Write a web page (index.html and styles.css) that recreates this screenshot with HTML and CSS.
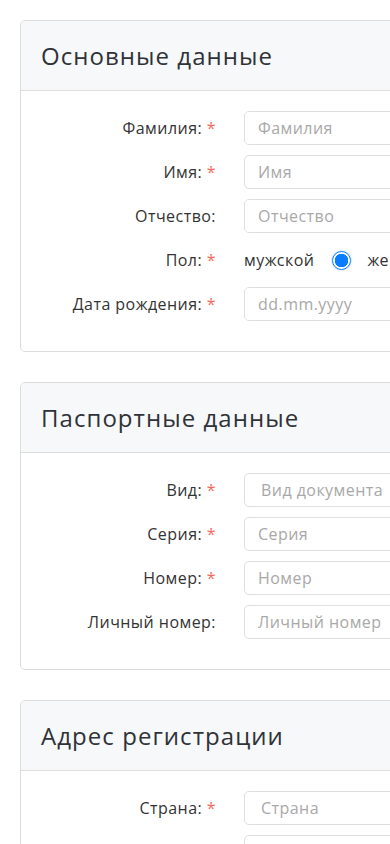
FILE: index.html
```html
<!DOCTYPE html>
<html lang="ru">
<head>
<meta charset="utf-8">
<meta name="viewport" content="width=device-width, initial-scale=1">
<title>Анкета</title>
<link rel="stylesheet" href="styles.css">
</head>
<body>
<div class="page">
  <section class="card">
    <header class="card-header"><h2>Основные данные</h2></header>
    <div class="card-body">
      <div class="row"><label class="lbl">Фамилия: <span class="req">*</span></label><input class="field" placeholder="Фамилия"></div>
      <div class="row"><label class="lbl">Имя: <span class="req">*</span></label><input class="field" placeholder="Имя"></div>
      <div class="row"><label class="lbl">Отчество:</label><input class="field" placeholder="Отчество"></div>
      <div class="row"><label class="lbl">Пол: <span class="req">*</span></label>
        <div class="radios">
          <span class="opt">мужской</span><span class="radio on"></span>
          <span class="opt">женский</span><span class="radio"></span>
        </div>
      </div>
      <div class="row"><label class="lbl">Дата рождения: <span class="req">*</span></label><input class="field" placeholder="dd.mm.yyyy"></div>
    </div>
  </section>

  <section class="card">
    <header class="card-header"><h2>Паспортные данные</h2></header>
    <div class="card-body">
      <div class="row"><label class="lbl">Вид: <span class="req">*</span></label><input class="field select" placeholder="Вид документа"></div>
      <div class="row"><label class="lbl">Серия: <span class="req">*</span></label><input class="field" placeholder="Серия"></div>
      <div class="row"><label class="lbl">Номер: <span class="req">*</span></label><input class="field" placeholder="Номер"></div>
      <div class="row"><label class="lbl">Личный номер:</label><input class="field" placeholder="Личный номер"></div>
    </div>
  </section>

  <section class="card">
    <header class="card-header"><h2>Адрес регистрации</h2></header>
    <div class="card-body">
      <div class="row"><label class="lbl">Страна: <span class="req">*</span></label><input class="field select" placeholder="Страна"></div>
      <div class="row"><label class="lbl">Регион: <span class="req">*</span></label><input class="field" placeholder="Регион"></div>
    </div>
  </section>
</div>
</body>
</html>
```

FILE: styles.css
```css
* { box-sizing: border-box; }
html, body { margin: 0; padding: 0; background: #fff; }
body {
  font-family: "Open Sans", "Liberation Sans", sans-serif;
  color: #333;
  overflow: hidden;
  width: 390px;
  height: 844px;
}
.page {
  padding: 20px 0 0 20px;
  width: 700px;
}
.card {
  border: 1px solid #dcdcdc;
  border-radius: 5px;
  margin-bottom: 30px;
  background: #fff;
  overflow: hidden;
}
.card-header {
  background: #f7f8fa;
  border-bottom: 1px solid #dcdcdc;
  height: 70px;
  display: flex;
  align-items: center;
  padding: 0 20px;
}
.card-header h2 {
  margin: 0;
  font-weight: 400;
  font-size: 24px;
  letter-spacing: 1.05px;
  color: #2f3338;
}
.card-body {
  padding: 20px 20px 20px 20px;
}
.row {
  display: grid;
  grid-template-columns: 175px 1fr;
  column-gap: 28px;
  align-items: center;
  height: 34px;
  margin-bottom: 10px;
}
.lbl {
  text-align: right;
  font-size: 16px;
  letter-spacing: 0.45px;
  color: #333;
  white-space: nowrap;
}
.req { color: #f46a5a; }
.field {
  height: 34px;
  width: 100%;
  border: 1px solid #dedede;
  border-radius: 5px;
  padding: 0 13px;
  font-family: inherit;
  font-size: 16px;
  letter-spacing: 0.45px;
  color: #333;
  background: #fff;
}
.field::placeholder { color: #a8a8a8; }
.field.select { padding-left: 16px; }
.radios {
  display: flex;
  align-items: center;
  font-size: 16px;
  letter-spacing: 0.45px;
}
.opt { color: #333; }
.radio {
  width: 19px;
  height: 19px;
  border-radius: 50%;
  border: 1px solid #bbb;
  margin: 0 16px 0 18px;
  flex: none;
}
.radio.on {
  border: 1.5px solid #0a7cff;
  background: radial-gradient(circle, #0a7cff 0 6.5px, #fff 7px);
  box-shadow: 0 0 0 1px rgba(10,124,255,0.15);
}
```
